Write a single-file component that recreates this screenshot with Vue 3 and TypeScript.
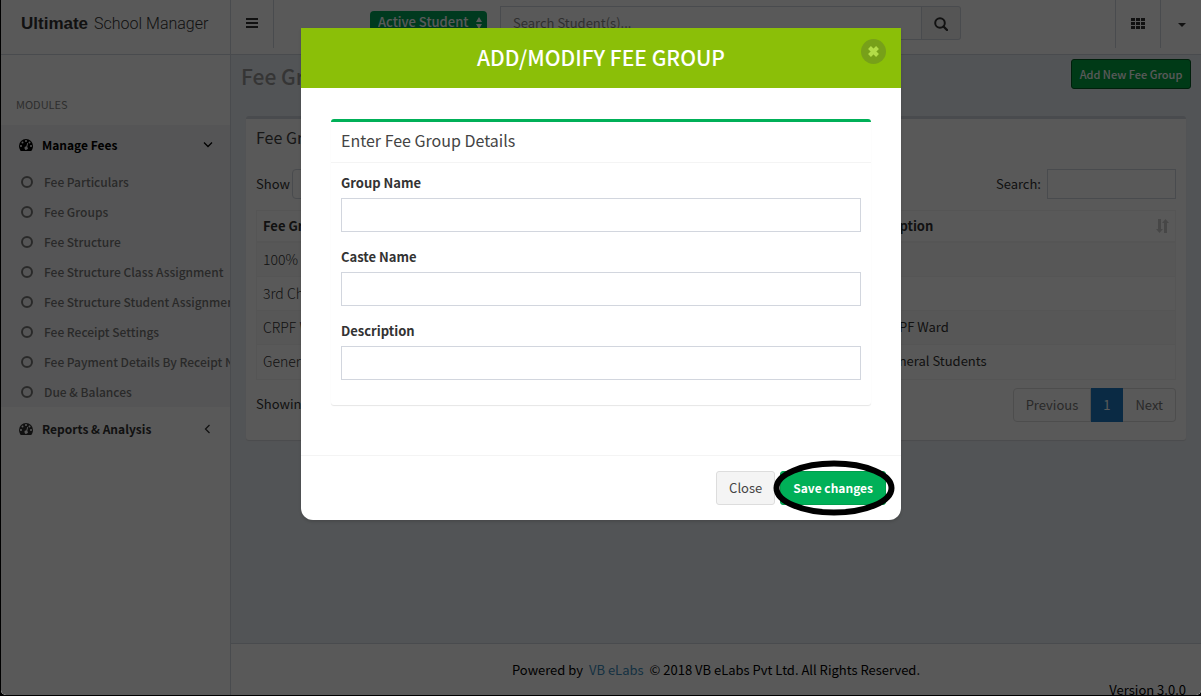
<script setup lang="ts">
import { ref } from 'vue'

interface FeeGroup {
  name: string
  caste: string
  description: string
}

const modules: string[] = [
  'Fee Particulars',
  'Fee Groups',
  'Fee Structure',
  'Fee Structure Class Assignment',
  'Fee Structure Student Assignment',
  'Fee Receipt Settings',
  'Fee Payment Details By Receipt No',
  'Due & Balances',
]

const feeGroups: FeeGroup[] = [
  { name: '100%', caste: '', description: '' },
  { name: '3rd Child', caste: '', description: '' },
  { name: 'CRPF Ward', caste: '', description: 'For CRPF Ward' },
  { name: 'General', caste: '', description: 'For General Students' },
]

const fields = [
  { id: 'group-name', label: 'Group Name' },
  { id: 'caste-name', label: 'Caste Name' },
  { id: 'description', label: 'Description' },
]

const form = ref<Record<string, string>>({ 'group-name': '', 'caste-name': '', description: '' })
</script>

<template>
  <div class="frame">
    <div class="app">
      <aside class="sidebar">
        <a class="logo" href="#"><b>Ultimate</b> <span>School Manager</span></a>
        <div class="side-title">MODULES</div>
        <nav class="menu">
          <div class="group open">
            <a class="group-link" href="#">
              <svg class="dash" viewBox="0 0 14 12"><path fill="currentColor" fill-rule="evenodd" d="M7 0a7 7 0 0 1 7 7c0 1.600-.5 3.200-1.300 4.500-.1.300-.4.500-.7.500H2c-.3 0-.6-.2-.7-.5A8 8 0 0 1 0 7a7 7 0 0 1 7-7ZM2 6.100a1 1 0 1 0 0 2 1 1 0 0 0 0-2ZM3.500 2.600a1 1 0 1 0 0 2 1 1 0 0 0 0-2ZM7 1.100a1 1 0 1 0 0 2 1 1 0 0 0 0-2ZM10.500 2.600a1 1 0 1 0 0 2 1 1 0 0 0 0-2ZM12 6.100a1 1 0 1 0 0 2 1 1 0 0 0 0-2ZM8.200 3.900 7.300 7.600A1.600 1.600 0 1 0 8.200 8l.9-3.800Z"/></svg>
              <span>Manage Fees</span>
              <svg class="angle" viewBox="0 0 10 10"><path d="M1 2.500 5 6.500 9 2.500" /></svg>
            </a>
            <ul>
              <li v-for="m in modules" :key="m">
                <a href="#"><i class="ring"></i>{{ m }}</a>
              </li>
            </ul>
          </div>
          <div class="group">
            <a class="group-link" href="#">
              <svg class="dash" viewBox="0 0 14 12"><path fill="currentColor" fill-rule="evenodd" d="M7 0a7 7 0 0 1 7 7c0 1.600-.5 3.200-1.300 4.500-.1.300-.4.500-.7.500H2c-.3 0-.6-.2-.7-.5A8 8 0 0 1 0 7a7 7 0 0 1 7-7ZM2 6.100a1 1 0 1 0 0 2 1 1 0 0 0 0-2ZM3.500 2.600a1 1 0 1 0 0 2 1 1 0 0 0 0-2ZM7 1.100a1 1 0 1 0 0 2 1 1 0 0 0 0-2ZM10.500 2.600a1 1 0 1 0 0 2 1 1 0 0 0 0-2ZM12 6.100a1 1 0 1 0 0 2 1 1 0 0 0 0-2ZM8.200 3.900 7.300 7.600A1.600 1.600 0 1 0 8.200 8l.9-3.800Z"/></svg>
              <span>Reports &amp; Analysis</span>
              <svg class="angle" viewBox="0 0 10 10"><path d="M6.500 1 2.500 5l4 4" /></svg>
            </a>
          </div>
        </nav>
      </aside>

      <div class="page">
        <header class="navbar">
          <button class="nav-btn toggle" aria-label="Toggle menu">
            <svg width="12" height="10" viewBox="0 0 12 10"><path fill="currentColor" d="M0 0h12v2H0zM0 4h12v2H0zM0 8h12v2H0z" /></svg>
          </button>
          <div class="status">
            <select aria-label="Student status"><option>Active Student</option></select>
            <svg width="6" height="12" viewBox="0 0 6 12"><path fill="currentColor" d="M3 0 6 5H0zM3 12 0 7h6z" /></svg>
          </div>
          <form class="student-search" @submit.prevent>
            <input type="text" placeholder="Search Student(s)..." aria-label="Search Student(s)" />
            <button aria-label="Search">
              <svg width="14" height="14" viewBox="0 0 14 14"><circle cx="6" cy="6" r="4.800" fill="none" stroke="currentColor" stroke-width="2" /><path d="m9.500 9.500 3.500 3.500" stroke="currentColor" stroke-width="2.400" stroke-linecap="round" /></svg>
            </button>
          </form>
          <div class="nav-right">
            <button class="nav-btn apps" aria-label="Applications">
              <svg width="14" height="11" viewBox="0 0 14 11"><path fill="currentColor" d="M0 0h4v3H0zM5 0h4v3H5zM10 0h4v3h-4zM0 4h4v3H0zM5 4h4v3H5zM10 4h4v3h-4zM0 8h4v3H0zM5 8h4v3H5zM10 8h4v3h-4z" /></svg>
            </button>
            <button class="nav-btn user" aria-label="Account">
              <svg width="8" height="4" viewBox="0 0 8 4"><path fill="currentColor" d="M0 0h8L4 4z" /></svg>
            </button>
          </div>
        </header>

        <main class="content">
          <div class="content-head">
            <h1>Fee Groups</h1>
            <button class="add">Add New Fee Group</button>
          </div>
          <section class="box">
            <h3>Fee Groups</h3>
            <div class="box-body">
              <div class="tools">
                <label class="show">Show <select class="length"><option>10</option></select></label>
                <label>Search: <input class="filter" type="search" /></label>
              </div>
              <table>
                <thead>
                  <tr>
                    <th class="c1">Fee Group</th>
                    <th class="c2">Caste Name</th>
                    <th>
                      <div class="th-in">
                        Description
                        <svg width="13" height="14" viewBox="0 0 13 14"><path fill="currentColor" d="M2 0h3v10h2l-3.500 4L0 10h2zM8 14h3V4h2L9.500 0 6 4h2z" /></svg>
                      </div>
                    </th>
                  </tr>
                </thead>
                <tbody>
                  <tr v-for="g in feeGroups" :key="g.name">
                    <td class="name">{{ g.name }}</td>
                    <td>{{ g.caste }}</td>
                    <td>{{ g.description }}</td>
                  </tr>
                </tbody>
              </table>
              <div class="table-foot">
                <span>Showing 1 to 4 of 4 entries</span>
                <div class="pager">
                  <a href="#">Previous</a><a class="current" href="#">1</a><a href="#">Next</a>
                </div>
              </div>
            </div>
          </section>
        </main>

        <footer class="footer">
          <div class="powered">Powered by <a href="#">VB eLabs</a> © 2018 VB eLabs Pvt Ltd. All Rights Reserved.</div>
          <div class="version">Version 3.0.0</div>
        </footer>
      </div>

      <div class="backdrop">
        <div class="modal" role="dialog" aria-labelledby="modal-title">
          <div class="modal-head">
            <h2 id="modal-title">ADD/MODIFY FEE GROUP</h2>
            <button class="x" aria-label="Dismiss">
              <svg width="11" height="11" viewBox="0 0 11 11"><path d="m1.500 1.500 8 8M9.500 1.500l-8 8" stroke="currentColor" stroke-width="4" /></svg>
            </button>
          </div>
          <div class="modal-body">
            <section class="form-box">
              <h3>Enter Fee Group Details</h3>
              <div class="form-body">
                <div v-for="f in fields" :key="f.id" class="field">
                  <label :for="f.id">{{ f.label }}</label>
                  <input :id="f.id" v-model="form[f.id]" type="text" />
                </div>
              </div>
            </section>
          </div>
          <div class="modal-foot">
            <button class="close">Close</button>
            <div class="save-wrap">
              <button class="save">Save changes</button>
              <svg class="marker" viewBox="0 0 122 56"><ellipse cx="61" cy="28" rx="57.500" ry="24.500" fill="none" stroke="#000" stroke-width="6" /></svg>
            </div>
          </div>
        </div>
      </div>
    </div>
  </div>
</template>

<style>
body {
  margin: 0;
}
</style>

<style scoped>
* {
  box-sizing: border-box;
}
.frame {
  height: 100vh;
  padding: 0 0 1px 1px;
  background: #000;
  overflow: hidden;
  font-family: "Noto Sans CJK SC", "Noto Sans", sans-serif;
  font-size: 13px;
  line-height: 20px;
  color: #333;
}
.app {
  position: relative;
  display: flex;
  height: 100%;
  overflow: hidden;
  border-radius: 0 0 5px 5px;
  background: #ecf0f5;
}
button,
input,
select {
  font: inherit;
  color: inherit;
  margin: 0;
  border-radius: 0;
}
button {
  padding: 0;
  background: none;
  border: 0;
  white-space: nowrap;
}
input,
select {
  appearance: none;
  background: #fff;
  border: 1px solid #d2d6de;
  outline: none;
}
a {
  text-decoration: none;
  color: inherit;
}
h1,
h2,
h3 {
  margin: 0;
  font-weight: 400;
}

.sidebar {
  flex: 0 0 230px;
  overflow: hidden;
  background: #fff;
  border-right: 1px solid #d2d6de;
  font-size: 12px;
}
.logo {
  display: flex;
  gap: 6px;
  align-items: center;
  height: 55px;
  padding: 0 0 6px 20px;
  border-bottom: 1px solid #d2d6de;
  font-family: "Liberation Sans", Arial, sans-serif;
  font-size: 17px;
  color: #333;
  white-space: nowrap;
}
.logo span {
  font-family: Roboto, "Liberation Sans", sans-serif;
  font-size: 16px;
  font-weight: 300;
}
.side-title {
  padding: 39px 15px 11px;
  font-size: 11px;
  color: #848484;
}
.group.open {
  background: #f4f4f5;
  color: #000;
}
.group-link {
  display: flex;
  align-items: center;
  height: 40px;
  padding: 0 17px 0 18px;
  font-weight: 700;
}
.group-link span {
  flex: 1;
  margin-left: 9px;
}
.dash {
  width: 14px;
  height: 12px;
}
.angle {
  width: 10px;
  height: 10px;
  fill: none;
  stroke: currentColor;
  stroke-width: 1.300;
}
.group ul {
  margin: 0 0 2px;
  padding: 2px 0 0;
  list-style: none;
}
.group li a {
  display: flex;
  align-items: center;
  height: 30px;
  padding-left: 20px;
  color: #777;
  font-weight: 500;
  white-space: nowrap;
}
.ring {
  flex: none;
  width: 12px;
  height: 12px;
  margin-right: 11px;
  border: 2px solid #777;
  border-radius: 50%;
}

.page {
  flex: 1;
  min-width: 0;
  display: flex;
  flex-direction: column;
}
.navbar {
  flex: none;
  display: flex;
  align-items: flex-start;
  height: 55px;
  background: #fff;
  border-bottom: 1px solid #d2d6de;
}
.nav-btn {
  display: flex;
  align-items: center;
  justify-content: center;
  height: 48px;
  padding-bottom: 2px;
}
.toggle {
  width: 43px;
  border-right: 1px solid #d2d6de;
}
.status {
  position: relative;
  margin: 11px 13px 0 96px;
  color: #fff;
}
.status select {
  display: block;
  width: 117px;
  height: 24px;
  padding: 0 8px 2px;
  border: 0;
  border-radius: 4px;
  background: #00a65a;
  font-weight: 500;
}
.status svg {
  position: absolute;
  top: 6px;
  right: 5px;
}
.student-search {
  display: flex;
  width: 461px;
  height: 34px;
  margin-top: 6px;
}
.student-search input {
  flex: 1;
  min-width: 0;
  padding: 0 12px;
}
.student-search input::placeholder {
  color: #888;
  opacity: 1;
}
.student-search button {
  width: 39px;
  border: 1px solid #d2d6de;
  border-left: 0;
  border-radius: 0 3px 3px 0;
  background: #f4f4f4;
}
.student-search svg {
  vertical-align: middle;
}
.nav-right {
  display: flex;
  margin-left: auto;
}
.apps,
.user {
  width: 45px;
  border-left: 1px solid #d2d6de;
}
.user {
  width: 41px;
  padding: 2px 0 0 2px;
}

.content {
  flex: 1;
}
.content-head {
  display: flex;
  justify-content: space-between;
  align-items: center;
  height: 61px;
  padding: 0 10px 19px;
}
h1 {
  font-size: 21px;
  font-weight: 500;
  color: #999;
}
.add {
  width: 120px;
  height: 30px;
  margin-top: -4px;
  padding-bottom: 1px;
  border: 1px solid #005a20;
  border-radius: 3px;
  background: #00a544;
  color: #fff;
  font-size: 11px;
  font-weight: 500;
}
.box {
  margin: 0 15px;
  background: #fff;
  border-top: 3px solid #d2d6de;
  border-radius: 3px;
  box-shadow: 0 1px 1px rgba(0, 0, 0, 0.1);
}
h3 {
  padding: 8px 10px 12px;
  font-size: 16px;
  line-height: 20px;
  color: #444;
}
.box-body {
  padding: 10px;
}
.tools {
  display: flex;
  justify-content: space-between;
  height: 41px;
}
.tools label {
  display: flex;
  align-items: center;
  gap: 6px;
  height: 30px;
}
.tools .show {
  gap: 2px;
}
.length {
  width: 60px;
  height: 30px;
  padding: 0 12px;
  border-radius: 4px;
}
.filter {
  width: 129px;
  height: 30px;
}
table {
  width: 100%;
  border: 1px solid #f4f4f4;
  border-collapse: separate;
  border-spacing: 0;
  table-layout: fixed;
}
.c1 {
  width: 33%;
}
.c2 {
  width: 32%;
}
th,
td {
  height: 34px;
  padding: 0 6px 2px;
  border-bottom: 1px solid #f4f4f4;
  text-align: left;
}
th {
  height: 32px;
  padding-bottom: 0;
  border-bottom: 2px solid #f4f4f4;
}
.th-in {
  display: flex;
  justify-content: space-between;
  align-items: center;
}
.th-in svg {
  color: #ccc;
}
tbody tr:nth-child(odd) {
  background: #f9f9f9;
}
tbody tr:last-child td {
  border-bottom: 0;
}
.name {
  font-size: 14px;
  font-weight: 300;
}
.table-foot {
  display: flex;
  justify-content: space-between;
  padding: 8px 0;
}
.table-foot > span {
  margin-top: 6px;
}
.pager {
  display: flex;
  color: #777;
}
.pager a {
  padding: 6px 12px;
  border: 1px solid #ddd;
  border-left: 0;
}
.pager a:first-child {
  border-left: 1px solid #ddd;
  border-radius: 4px 0 0 4px;
}
.pager a:last-child {
  border-radius: 0 4px 4px 0;
}
.pager .current {
  border-color: #1e79c2;
  background: #1e79c2;
  color: #fff;
}
.footer {
  flex: none;
  height: 52px;
  padding: 16px 15px 0;
  border-top: 1px solid #d2d6de;
  background: #fff;
  color: #000;
}
.powered {
  text-align: center;
}
.powered a {
  margin: 0 3px;
  color: #3c8dbc;
}
.version {
  text-align: right;
}

.backdrop {
  position: absolute;
  inset: 0;
  overflow: hidden;
  background: rgba(0, 0, 0, 0.65);
}
.modal {
  width: 100%;
  max-width: 600px;
  margin: 28px auto;
  background: #fff;
  border-radius: 0 0 12px 12px;
  box-shadow: 0 2px 3px rgba(0, 0, 0, 0.13);
}
.modal-head {
  position: relative;
  display: flex;
  align-items: center;
  justify-content: center;
  height: 60px;
  padding-bottom: 3px;
  background: #8bbf08;
}
h2 {
  font-size: 21px;
  font-weight: 500;
  color: #fff;
}
.x {
  position: absolute;
  top: 11px;
  right: 15px;
  display: flex;
  align-items: center;
  justify-content: center;
  width: 25px;
  height: 25px;
  border-radius: 50%;
  background: #77a019;
  color: #b3dc48;
}
.modal-body {
  padding: 31px 30px 50px;
}
.form-box {
  border-top: 3px solid #00b058;
  border-radius: 3px;
  box-shadow: 0 1px 1px rgba(0, 0, 0, 0.1);
}
.form-box h3 {
  border-bottom: 1px solid #f4f4f4;
}
.form-body {
  padding: 10px;
}
.field {
  margin-bottom: 15px;
}
.field label {
  display: block;
  margin-bottom: 5px;
  font-weight: 700;
}
.field input {
  display: block;
  width: 100%;
  height: 34px;
  padding: 6px 12px;
}
.modal-foot {
  display: flex;
  justify-content: flex-end;
  gap: 5px;
  padding: 15px;
  border-top: 1px solid #f4f4f4;
}
.close,
.save {
  height: 34px;
  padding: 0 12px;
  border: 1px solid #ddd;
  border-radius: 3px;
  background: #f4f4f4;
  color: #444;
}
.save {
  border-color: #00a04c;
  background: #00b058;
  color: #fff;
  font-size: 12px;
  font-weight: 700;
}
.save-wrap {
  position: relative;
}
.marker {
  position: absolute;
  top: -11px;
  left: -7px;
  width: 122px;
  height: 56px;
  pointer-events: none;
}
</style>
